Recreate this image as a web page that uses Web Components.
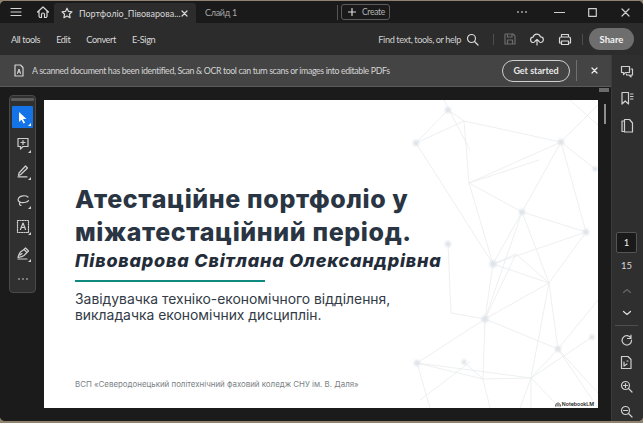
<!DOCTYPE html>
<html><head><meta charset="utf-8">
<style>
html,body{margin:0;padding:0;width:643px;height:423px;overflow:hidden;background:#8f8370}
</style></head><body>
<acro-window>
  <title-bar slot="title"></title-bar>
  <tool-bar slot="tools"></tool-bar>
  <scan-banner slot="banner"></scan-banner>
  <doc-view slot="doc"></doc-view>
  <side-rail slot="rail"></side-rail>
</acro-window>
<script>
const ic=(w,h,body,extra='')=>`<svg width="${w}" height="${h}" viewBox="0 0 ${w} ${h}" fill="none" stroke="currentColor" stroke-width="1.2" stroke-linecap="round" stroke-linejoin="round" style="flex:none" ${extra}>${body}</svg>`;
function def(name,css,html){
  customElements.define(name,class extends HTMLElement{
    constructor(){super();this.attachShadow({mode:'open'}).innerHTML=`<style>${css}</style>${html}`;}
  });
}
const UI=`font-family:Lato,"Noto Sans",sans-serif;`;

def('acro-window',`
:host{display:grid;width:643px;height:420px;margin-top:1px;grid-template-columns:1fr 32px;grid-template-rows:22px 32px 32px 1fr;background:#1b1b1b;border-radius:5px;overflow:hidden;${UI}}
::slotted([slot=title]),::slotted([slot=tools]){grid-column:1/3}
::slotted([slot=rail]){grid-column:2;grid-row:3/5}
::slotted([slot=banner]){grid-column:1;grid-row:3}
::slotted([slot=doc]){grid-column:1;grid-row:4}
`,`<slot name="title"></slot><slot name="tools"></slot><slot name="banner"></slot><slot name="doc"></slot><slot name="rail"></slot>`);

def('title-bar',`
:host{display:flex;align-items:center;background:#1a1a1a;color:#d6d6d6;font-size:9px;height:22px}
.btn{display:flex;align-items:center;justify-content:center}
.menu{width:32px}.home{width:22px}
.tab{display:flex;align-items:center;height:20px;margin-top:2px;width:142px;background:#2c2c2c;border-radius:3px 3px 0 0;padding-left:7px;box-sizing:border-box;gap:6px;color:#d8d8d8;flex:none}
.tab .t{width:96px;white-space:nowrap}
.s2{margin-left:9px;color:#a8a8a8;width:132px;flex:none;letter-spacing:-.3px}
.sep{width:1px;height:15px;background:#555;margin-right:3px;flex:none}
.create{display:flex;align-items:center;gap:6px;height:16px;border:1px solid #5c5c5c;border-radius:3px;padding:0 3px 0 6px;font-size:8.500px;letter-spacing:-.3px;color:#b4b4b4;box-sizing:border-box;width:49px;flex:none;white-space:nowrap}
.create svg{color:#d8d8d8}
.sp{flex:1}
.win{display:flex;align-items:center;color:#cfcfcf;margin-right:6px}
.win>div{display:flex;justify-content:center}
.dots{color:#999;width:38px;margin-right:6px}
`,`
<div class="btn menu">${ic(12,12,'<path d="M1 2.500h10M1 6h10M1 9.500h10"/>')}</div>
<div class="btn home">${ic(14,14,'<path d="M1.500 7 7 2l5.500 5M3 6v5a1.500 1.500 0 0 0 1.500 1.500h1V9.500a1.500 1.500 0 0 1 3 0v3h1A1.500 1.500 0 0 0 11 11V6"/>')}</div>
<div class="tab">${ic(12,12,'<path d="m6 1.200 1.500 3.200 3.500.4-2.600 2.400.7 3.500L6 8.900l-3.100 1.800.7-3.500L1 4.800l3.500-.4z"/>')}<span class="t">Портфоліо_Півоварова...</span>${ic(7,7,'<path d="m1 1 5 5M6 1 1 6"/>','stroke-width="1.500"')}</div>
<div class="s2">Слайд 1</div>
<div class="sep"></div>
<div class="create">${ic(8,8,'<path d="M4 .5v7M.5 4h7"/>')}<span>Create</span></div>
<div class="sp"></div>
<div class="win">
 <div class="dots">${ic(12,4,'<circle cx="2" cy="2" r=".5"/><circle cx="6" cy="2" r=".5"/><circle cx="10" cy="2" r=".5"/>')}</div>
 <div style="width:24px">${ic(11,3,'<path d="M.5 1.500h10"/>')}</div>
 <div style="width:42px">${ic(9,9,'<rect x=".7" y=".7" width="7.600" height="7.600"/>')}</div>
 <div style="width:24px">${ic(9,9,'<path d="m1 1 7 7M8 1 1 8"/>')}</div>
</div>`);

def('tool-bar',`
:host{display:flex;align-items:center;background:#2c2c2c;color:#d8d8d8;font-size:9.200px;letter-spacing:-.4px;height:32px;padding-left:11px;box-sizing:border-box}
.l{display:flex;gap:16px;white-space:nowrap}
.sp{flex:1}
.find{color:#cfcfcf;margin-right:5px;white-space:nowrap}
.sep{width:1px;height:11px;background:#4d4d4d}
.i{display:flex;justify-content:center}
.share{width:45px;height:22px;border-radius:11px;background:#6e6e6e;color:#f2f2f2;font-weight:700;font-size:9.500px;letter-spacing:0;display:flex;align-items:center;justify-content:center;margin:0 9px 0 6px}
`,`
<div class="l"><span>All tools</span><span>Edit</span><span>Convert</span><span>E-Sign</span></div>
<div class="sp"></div>
<span class="find">Find text, tools, or help</span>
<div class="i" style="margin-right:14px">${ic(13,13,'<circle cx="5.500" cy="5.500" r="4"/><path d="m8.500 8.500 3.500 3.500"/>')}</div>
<div class="sep"></div>
<div class="i" style="margin:0 14px 0 10px;color:#6c6c6c">${ic(12,12,'<path d="M1 1h8l2 2v8H1zM3.500 1v3h4.500V1M3.500 11V7h5v4"/>')}</div>
<div class="i" style="margin-right:14px">${ic(14,13,'<path d="M4 9.500H3.500a2.700 2.700 0 0 1-.4-5.400 3.800 3.800 0 0 1 7.300-.3 2.800 2.800 0 0 1 .2 5.700H10M7 12V6.500M4.800 8.500 7 6.300l2.200 2.200"/>')}</div>
<div class="i" style="margin-right:10px">${ic(14,13,'<path d="M3.500 4V1.500h7V4M3.500 10H1.500V5.500A1.500 1.500 0 0 1 3 4h8a1.500 1.500 0 0 1 1.500 1.500V10h-2M3.500 8h7v3.500h-7z"/>')}</div>
<div class="sep"></div>
<div class="share">Share</div>`);

def('scan-banner',`
:host{display:flex;align-items:center;background:#444;color:#d4d4d4;font-size:8.800px;height:32px;padding-left:13px;box-sizing:border-box;border-bottom:1px solid #5a5a5a}
.msg{margin-left:7px;white-space:nowrap;flex:1;letter-spacing:-.38px}
.get{width:68px;height:22px;border:1.500px solid #cfcfcf;border-radius:11px;box-sizing:border-box;color:#e8e8e8;font-weight:700;font-size:9px;display:flex;align-items:center;justify-content:center;flex:none}
.sep{width:1px;height:21px;background:#707070;margin-left:6px;flex:none}
.x{width:34px;display:flex;justify-content:center;color:#eee;flex:none}
`,`
${ic(12,13,'<path d="M2 1h5.500L10 3.500V12H2z"/><path d="M4.500 9.500 6 5l1.500 4.500M5 8h2" stroke-width="1"/>')}
<span class="msg">A scanned document has been identified, Scan &amp; OCR tool can turn scans or images into editable PDFs</span>
<div class="get">Get started</div><div class="sep"></div>
<div class="x">${ic(7,7,'<path d="m1 1 5 5M6 1 1 6"/>','stroke-width="1.600"')}</div>`);

def('doc-view',`
:host{display:flex;position:relative;background:#1b1b1b;min-height:0;padding-top:13px;box-sizing:border-box}
.gut{width:44px;flex:none}
.bar{width:13px;position:relative;flex:none;margin-top:-13px;background:#1b1b1b}
.up{position:absolute;left:1px;top:1px;width:10px;height:4px;background:#6a6a6a}
.th{position:absolute;left:6px;top:17px;width:1.500px;height:20px;background:#8c8c8c}
float-tools{position:absolute;left:9px;top:8px}
`,`<div class="gut"></div><slide-page></slide-page><div class="bar"><div class="up"></div><div class="th"></div></div><float-tools></float-tools>`);

def('float-tools',`
:host{display:flex;flex-direction:column;align-items:center;width:27px;height:198px;background:#303030;border:1px solid #4a4a4a;border-radius:4px;box-sizing:border-box;color:#cfcfcf}
.grip{width:23px;height:3px;background:#5c5c5c;margin-top:2px;border-radius:1px}
.t{position:relative;width:21px;height:22px;display:flex;align-items:center;justify-content:center;border-radius:1px;flex:none}
.t::after{content:"";position:absolute;right:2px;bottom:2px;border:solid transparent;border-width:0 0 3px 3px;border-bottom-color:currentColor}
.on{background:#1473e6;color:#fff}
.d{margin-top:13px;color:#999;display:flex}
`,`
<div class="grip"></div>
<div class="t on" style="margin-top:5px"><svg width="11" height="13" viewBox="0 0 11 13" fill="#fff"><path d="M2 1v10l2.500-2.300L6.500 12.500l1.600-.8-2-3.700H9.500z"/></svg></div>
<div class="t" style="margin-top:5px">${ic(14,14,'<path d="M2 1.500h10v8H7L4.500 12V9.500H2zM7 3.500v4M5 5.500h4"/>')}</div>
<div class="t" style="margin-top:5px">${ic(14,14,'<path d="m3 9 6.500-7 2 2-7 6.800-2 .6zM2 12.800h9"/>')}</div>
<div class="t" style="margin-top:7px">${ic(14,14,'<path d="M12.500 7.500C12 9 8 10 5 9.500 2.500 9 1.500 7 2.500 5.200 4 2.500 9.500 2 12 4M4 9.500c-1 1-.5 2.500 1 3"/>')}</div>
<div class="t" style="margin-top:4px">${ic(14,15,'<path d="M1.500 1.500h11v12h-11z" stroke-dasharray="1.200 1.200"/><path d="M4.500 10.500 7 4l2.500 6.500M5.300 8.500h3.400"/>')}</div>
<div class="t" style="margin-top:5px">${ic(14,14,'<path d="M2 11.500c1-3 1-4 2.500-5.500L8 3.500l3 3-3 3c-1.500 1.200-3 1.500-6 2zM8 3.500 9.500 2l3 3L11 6.500M4 9l2-1.500M2 13h9"/>')}</div>
<div class="d">${ic(12,4,'<circle cx="2" cy="2" r=".4"/><circle cx="6" cy="2" r=".4"/><circle cx="10" cy="2" r=".4"/>')}</div>`);

const nodes={A:[416,143],B:[448,110],C:[464,121],D:[561,142],E:[469,183],F:[522,212],G:[586,232],H:[493,264],I:[448,244],J:[516,254],K:[549,283],L:[451,313],M:[485,319],N:[558,349],O:[592,337],P:[417,363],Q:[464,362],R:[531,378],S:[483,379],T:[539,160],U:[595,169],V:[598,105],W:[598,307],X:[598,300]};
const edges='AC AB BC CE CD DE EH EF FD FG FH FK HG HK HM IL LM MF MK MN MP MS PS PR SR NR NK DV DU DG GK ET JK JH MJ QS RK NX OR AH';
let ln='';
edges.split(' ').forEach(e=>{const a=nodes[e[0]],b=nodes[e[1]];ln+=`<line x1="${a[0]}" y1="${a[1]}" x2="${b[0]}" y2="${b[1]}"/>`;});
[[444,100,470,150],[570,100,598,125],[420,400,470,362],[520,408,531,378],[490,408,483,379],[531,408,531,378],[430,408,417,363],[560,408,531,378],[598,393,558,349],[598,408,558,349]].forEach(l=>{ln+=`<line x1="${l[0]}" y1="${l[1]}" x2="${l[2]}" y2="${l[3]}"/>`;});
let dots='';
['A:3','B:3','D:3','F:3','G:3','H:3.500','I:3','M:3.500','N:3','O:2.500','P:3','Q:2.500','U:2.500'].forEach(d=>{const [k,r]=d.split(':');const n=nodes[k];dots+=`<circle cx="${n[0]}" cy="${n[1]}" r="${r}"/>`;});

def('slide-page',`
:host{display:flex;flex-direction:column;position:relative;width:554px;height:308px;flex:none;background:#fff;box-sizing:border-box;padding:83px 0 0 31px;font-family:Inter,"Noto Sans",sans-serif;color:#232f3e;overflow:hidden}
svg.net{position:absolute;left:0;top:0}
h1{margin:0;font-size:25px;line-height:33px;font-weight:800;letter-spacing:.62px;color:#2a3543;position:relative;white-space:nowrap}
h2{margin:0;font-size:18px;line-height:24px;font-weight:800;font-style:italic;letter-spacing:.78px;color:#232c38;position:relative;white-space:nowrap;margin-top:0}
.rule{width:190px;height:2px;background:#0e8a80;margin-top:7px;position:relative}
p{margin:9px 0 0;font-size:13.900px;line-height:16px;color:#333b46;position:relative;white-space:nowrap}
.sp{flex:1}
.foot{position:relative;font-size:7.900px;color:#7b7f86;margin-bottom:19px;white-space:nowrap}
.nb{position:absolute;right:4px;bottom:1px;font-size:5.200px;font-weight:600;color:#222;display:flex;align-items:center;gap:1px;white-space:nowrap}
`,`
<svg class="net" width="554" height="308" viewBox="44 100 554 308"><defs><filter id="b"><feGaussianBlur stdDeviation=".8"/></filter></defs><g stroke="#e8ebee" stroke-width=".8">${ln}</g><g fill="#dfe4e9" filter="url(#b)">${dots}</g></svg>
<h1>Атестаційне портфоліо у<br>міжатестаційний період.</h1>
<h2>Півоварова Світлана Олександрівна</h2>
<div class="rule"></div>
<p>Завідувачка техніко-економічного відділення,<br>викладачка економічних дисциплін.</p>
<div class="sp"></div>
<div class="foot">ВСП «Северодонецький політехнічний фаховий коледж СНУ ім. В. Даля»</div>
<div class="nb"><svg width="6" height="5" viewBox="0 0 6 5" fill="none" stroke="#222" stroke-width=".8"><path d="M.5 4.500C.5 2 2 1 3 1s2.500 1 2.500 3.500M2 4.500C2 3 2.500 2.500 3 2.500s1 .5 1 2"/></svg>NotebookLM</div>`);

def('side-rail',`
:host{display:flex;flex-direction:column;align-items:center;background:#2f2f2f;color:#cfcfcf;font-size:9.500px;border-left:1px solid #3a3a3a;padding-right:2px;box-sizing:border-box;${UI}}
.i{display:flex;justify-content:center;flex:none;position:relative}
.box{width:21px;height:21px;background:#1a1a1a;border:1px solid #555;border-radius:2px;box-sizing:border-box;display:flex;align-items:center;justify-content:center;color:#eee;margin-top:99px;flex:none}
.n{margin-top:7px;line-height:12px;color:#d8d8d8}
hr{width:23px;border:0;border-top:1px solid #4e4e4e;margin:9px 0 7px;flex:none}
`,`
<div class="i" style="margin-top:10px">${ic(14,14,'<path d="M1.500 1.500h8v6h-4L3.500 9.500v-2h-2zM11 4h1.500v6H11v2l-2-2H6.500V9"/>')}</div>
<div class="i" style="margin-top:12px">${ic(14,15,'<path d="M2 1.500h6.500v11.500L5.200 10 2 13zM10.500 3H13M10.500 5.500H13M10.500 8H13"/>')}</div>
<div class="i" style="margin-top:12px">${ic(14,15,'<path d="M4 3H2v10.500h2M4.500 1.500h5L12.500 5v9h-8z"/>')}</div>
<div class="box">1</div>
<div class="n">15</div>
<div class="i" style="margin-top:16px;color:#666">${ic(10,6,'<path d="m1.500 4.500 3.500-3 3.500 3"/>','stroke-width="1.500"')}</div>
<div class="i" style="margin-top:16px;color:#ddd">${ic(10,6,'<path d="m1.500 1.500 3.500 3 3.500-3"/>','stroke-width="1.500"')}</div>
<hr>
<div class="i">${ic(13,13,'<path d="M11 2v3.500H7.500M11 5.200A4.700 4.700 0 1 0 11.500 7"/>')}</div>
<div class="i" style="margin-top:9px">${ic(13,15,'<path d="M1.500 1.500h6.500L11 4.500v9H1.500zM4 7v4M4 11l3-2M7 6h1"/>')}</div>
<div class="i" style="margin-top:10px">${ic(13,13,'<circle cx="5.500" cy="5.500" r="4"/><path d="m8.500 8.500 3.500 3.500M5.500 3.500v4M3.500 5.500h4"/>')}</div>
<div class="i" style="margin-top:12px">${ic(13,13,'<circle cx="5.500" cy="5.500" r="4"/><path d="m8.500 8.500 3.500 3.500M3.500 5.500h4"/>')}</div>`);
</script>
</body></html>
